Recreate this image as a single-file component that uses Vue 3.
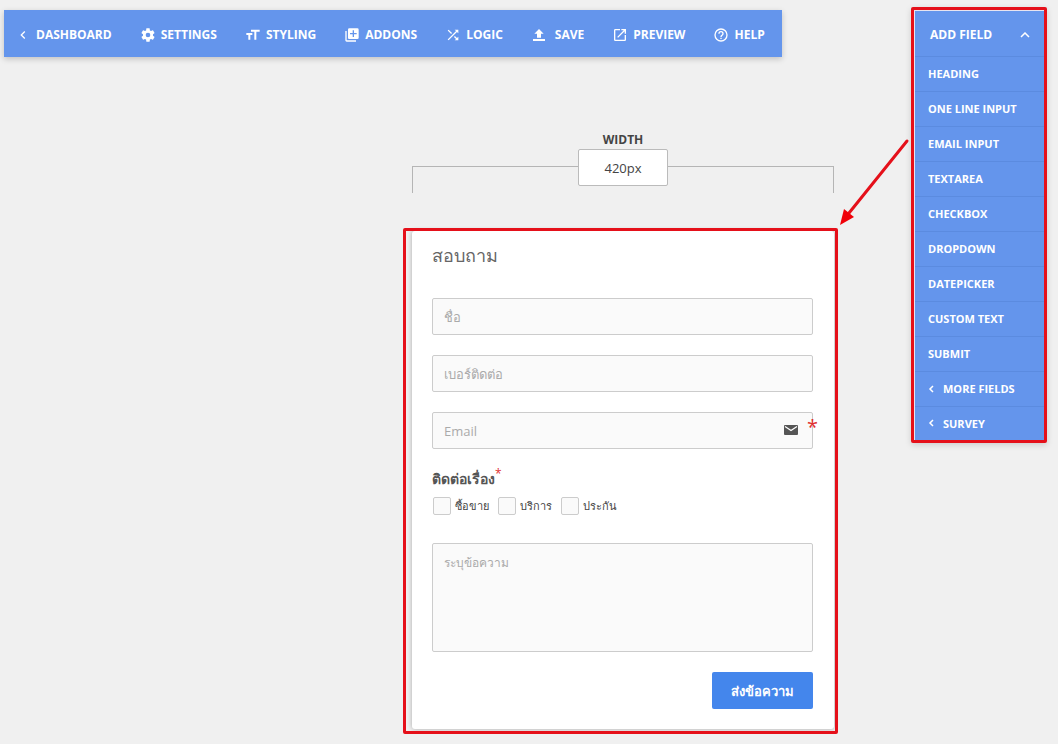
<script setup>
import { ref } from 'vue'

const tools = [
  { name: 'DASHBOARD', icon: 'M15.41 7.41 14 6l-6 6 6 6 1.41-1.41L10.83 12z' },
  { name: 'SETTINGS', icon: 'M19.43 12.98c.04-.32.07-.64.07-.98s-.03-.66-.07-.98l2.11-1.65c.19-.15.24-.42.12-.64l-2-3.46c-.12-.22-.39-.3-.61-.22l-2.49 1c-.52-.4-1.08-.73-1.69-.98l-.38-2.65C14.46 2.18 14.25 2 14 2h-4c-.25 0-.46.18-.49.42l-.38 2.65c-.61.25-1.17.59-1.69.98l-2.49-1c-.23-.09-.49 0-.61.22l-2 3.46c-.13.22-.07.49.12.64l2.11 1.65c-.04.32-.07.65-.07.98s.03.66.07.98l-2.11 1.65c-.19.15-.24.42-.12.64l2 3.46c.12.22.39.3.61.22l2.49-1c.52.4 1.08.73 1.69.98l.38 2.65c.03.24.24.42.49.42h4c.25 0 .46-.18.49-.42l.38-2.65c.61-.25 1.17-.59 1.69-.98l2.49 1c.23.09.49 0 .61-.22l2-3.46c.12-.22.07-.49-.12-.64zM12 15.5a3.5 3.5 0 1 1 0-7 3.5 3.5 0 0 1 0 7z' },
  { name: 'STYLING', icon: 'M9 4v3h5v12h3V7h5V4zM2 12h3v7h3v-7h3V9H2z' },
  { name: 'ADDONS', icon: 'M4 6H2v14c0 1.100.9 2 2 2h14v-2H4zM20 2H8a2 2 0 0 0-2 2v12c0 1.100.9 2 2 2h12a2 2 0 0 0 2-2V4a2 2 0 0 0-2-2zm-1 9h-4v4h-2v-4H9V9h4V5h2v4h4z' },
  { name: 'LOGIC', icon: 'M10.59 9.17 5.41 4 4 5.41l5.170 5.170zM14.500 4l2.040 2.040L4 18.590 5.410 20 17.960 7.460 20 9.500V4zm.33 9.410-1.410 1.410 3.130 3.130L14.500 20H20v-5.500l-2.040 2.040z' },
  { name: 'SAVE', icon: 'M9 16h6v-6h4l-7-7-7 7h4zm-6 2h18v3H3z', wide: true },
  { name: 'PREVIEW', icon: 'M19 19H5V5h7V3H5a2 2 0 0 0-2 2v14a2 2 0 0 0 2 2h14a2 2 0 0 0 2-2v-7h-2zM14 3v2h3.590l-9.830 9.830 1.410 1.410L19 6.410V10h2V3z' },
  { name: 'HELP', icon: 'M11 18h2v-2h-2zM12 2a10 10 0 1 0 0 20 10 10 0 0 0 0-20zm0 18a8 8 0 1 1 0-16 8 8 0 0 1 0 16zm0-14a4 4 0 0 0-4 4h2a2 2 0 1 1 4 0c0 2-3 1.750-3 5h2c0-2.250 3-2.500 3-5a4 4 0 0 0-4-4z' },
]
const fields = [
  { name: 'HEADING' },
  { name: 'ONE LINE INPUT' },
  { name: 'EMAIL INPUT' },
  { name: 'TEXTAREA' },
  { name: 'CHECKBOX' },
  { name: 'DROPDOWN' },
  { name: 'DATEPICKER' },
  { name: 'CUSTOM TEXT' },
  { name: 'SUBMIT' },
  { name: 'MORE FIELDS', more: true },
  { name: 'SURVEY', more: true },
]
const topics = ['ซื้อขาย', 'บริการ', 'ประกัน']
const width = ref('420px')
const chosen = ref([])
</script>

<template>
  <div class="page">
    <header>
      <nav class="toolbar">
        <button v-for="t in tools" :key="t.name" type="button" class="tool" :class="{ wide: t.wide }">
          <svg viewBox="0 0 24 24" aria-hidden="true"><path :d="t.icon" /></svg>
          <span>{{ t.name }}</span>
        </button>
      </nav>
    </header>

    <main>
      <div class="builder">
        <label class="width-label" for="form-width">WIDTH</label>
        <div class="ruler">
          <span class="arm left"></span>
          <input id="form-width" v-model="width" type="text" />
          <span class="arm right"></span>
        </div>

        <form class="card" @submit.prevent>
          <h1>สอบถาม</h1>
          <input class="box" type="text" aria-label="ชื่อ" placeholder="ชื่อ" />
          <input class="box" type="tel" aria-label="เบอร์ติดต่อ" placeholder="เบอร์ติดต่อ" />
          <div class="email">
            <input class="box" type="email" aria-label="Email" placeholder="Email" />
            <svg class="mail" viewBox="0 0 14 10" aria-hidden="true">
              <rect width="14" height="10" rx="1" fill="#555" />
              <path d="M1 1.500 7 5.500 13 1.500" fill="none" stroke="#fff" stroke-width="1.300" />
            </svg>
            <span class="star">*</span>
          </div>
          <fieldset>
            <legend>ติดต่อเรื่อง<sup>*</sup></legend>
            <div class="choices">
              <label v-for="t in topics" :key="t"><input v-model="chosen" type="checkbox" :value="t" />{{ t }}</label>
            </div>
          </fieldset>
          <textarea class="box" aria-label="ระบุข้อความ" placeholder="ระบุข้อความ"></textarea>
          <button type="submit" class="send">ส่งข้อความ</button>
          <span class="frame"></span>
        </form>
        <svg class="arrow" viewBox="0 0 72 90" aria-hidden="true">
          <path d="M69 3 11 75" fill="none" stroke="#e5101a" stroke-width="3" stroke-linecap="round" />
          <path d="M2 87 6 71 11 75 16 79z" fill="#f00008" />
        </svg>
      </div>
    </main>

    <aside>
      <div class="panel">
        <button type="button" class="panel-head">
          <span>ADD FIELD</span>
          <svg viewBox="0 0 10 6" aria-hidden="true"><path d="M1 5 5 1 9 5" /></svg>
        </button>
        <button v-for="f in fields" :key="f.name" type="button" class="field">
          <svg v-if="f.more" viewBox="0 0 6 8" aria-hidden="true"><path d="M5 1 2 4 5 7" /></svg>
          <span>{{ f.name }}</span>
        </button>
      </div>
    </aside>
  </div>
</template>

<style>
body {
  background: #f0f0f0;
}
</style>

<style scoped>
* {
  box-sizing: border-box;
}
.page {
  display: grid;
  grid-template-columns: 1fr auto;
  grid-template-rows: auto 1fr;
  min-height: 100vh;
  font-family: "Open Sans", "Noto Sans", sans-serif;
  color: #444;
}
button,
input,
textarea {
  font-family: inherit;
  margin: 0;
}
header {
  padding: 10px 0 0 4px;
}
.toolbar {
  display: inline-flex;
  height: 47px;
  background: #6495ec;
  box-shadow: 0 2px 6px rgba(0, 0, 0, 0.2);
  vertical-align: top;
}
.tool {
  display: flex;
  align-items: center;
  gap: 5px;
  padding: 2px 17px 0 11px;
  border: 0;
  background: none;
  color: #fff;
  font-size: 12px;
  font-weight: 700;
  white-space: nowrap;
}
.tool svg {
  width: 16px;
  height: 16px;
  fill: currentColor;
}
.tool.wide {
  gap: 8px;
}
main {
  padding: 74px 0 0 335px;
}
.builder {
  position: relative;
  width: 422px;
  margin: 0 auto;
}
.width-label {
  display: block;
  font-size: 12px;
  line-height: 18px;
  font-weight: 700;
  text-align: center;
}
.ruler {
  display: flex;
  align-items: flex-start;
  margin-bottom: 38px;
}
.ruler input {
  width: 90px;
  height: 37px;
  border: 1px solid #bbb;
  border-radius: 2px;
  background: #fff;
  font-size: 13px;
  color: #444;
  text-align: center;
}
.arm {
  flex: 1;
  height: 27px;
  margin-top: 17px;
  border-top: 1px solid #b5b5b5;
}
.arm.left {
  border-left: 1px solid #b5b5b5;
}
.arm.right {
  border-right: 1px solid #b5b5b5;
}
.card {
  position: relative;
  display: flex;
  flex-direction: column;
  gap: 20px;
  padding: 10px 21px 20px 20px;
  background: #fff;
  border-radius: 3px;
  box-shadow: 0 0 5px rgba(0, 0, 0, 0.3);
}
.frame {
  position: absolute;
  inset: -3px -4px -5px -9px;
  border: 3px solid #e5101a;
  border-radius: 2px;
  pointer-events: none;
}
h1 {
  margin: 0 0 9px;
  font-size: 18px;
  line-height: 28px;
  font-weight: 400;
  color: #666;
}
.box {
  display: block;
  width: 100%;
  height: 37px;
  padding: 0 11px;
  border: 1px solid #ccc;
  border-radius: 2px;
  background: #fafafa;
  font-size: 13px;
  color: #444;
}
.box::placeholder {
  color: #aaa;
  opacity: 1;
}
.email {
  position: relative;
}
.mail {
  position: absolute;
  right: 15px;
  top: 13px;
  width: 14px;
  height: 10px;
}
.star {
  position: absolute;
  right: -5px;
  top: 0;
  font-size: 20px;
  line-height: 30px;
  color: #e02f2f;
}
fieldset {
  margin: 0 0 8px;
  padding: 0;
  border: 0;
  min-width: 0;
}
legend {
  padding: 0;
  font-size: 14px;
  line-height: 20px;
  font-weight: 700;
  color: #555;
}
sup {
  font-size: 12px;
  line-height: 0;
  font-weight: 400;
  color: #e02f2f;
}
.choices {
  display: flex;
  gap: 9px;
  margin-top: 7px;
  padding-left: 1px;
}
.choices label {
  display: flex;
  align-items: center;
  gap: 4px;
  font-size: 11px;
  line-height: 19px;
}
.choices input {
  appearance: none;
  width: 18px;
  height: 18px;
  border: 1px solid #ccc;
  border-radius: 2px;
  background: #fafafa;
}
textarea.box {
  height: 109px;
  padding: 9px 11px;
  font-size: 12px;
  resize: none;
}
.send {
  align-self: flex-end;
  height: 37px;
  padding: 2px 19px 0;
  border: 0;
  border-radius: 2px;
  background: #4486ec;
  color: #fff;
  font-size: 13px;
  font-weight: 700;
}
.arrow {
  position: absolute;
  left: 426px;
  top: 7px;
  width: 72px;
  height: 90px;
}
aside {
  grid-column: 2;
  grid-row: 1 / span 2;
  padding: 7px 11px 0 0;
}
.panel {
  width: 136px;
  border: 3px solid #e5101a;
  border-radius: 2px;
  background: #6495ec;
  box-shadow: inset 1px 1px 0 #e8e4f0, 0 2px 6px rgba(0, 0, 0, 0.15);
  padding: 1px 0 0 1px;
}
.panel button {
  display: flex;
  align-items: center;
  width: 100%;
  border: 0;
  border-bottom: 1px solid #5b8be0;
  background: none;
  color: #fff;
  font-weight: 700;
  white-space: nowrap;
}
.panel svg {
  fill: none;
  stroke: currentColor;
  stroke-width: 1.500;
}
.panel .panel-head {
  justify-content: space-between;
  height: 46px;
  padding: 2px 14px 0 15px;
  font-size: 12px;
}
.panel-head svg {
  width: 10px;
  height: 6px;
}
.panel .field {
  gap: 9px;
  height: 35px;
  padding: 0 13px 1px;
  font-size: 11px;
}
.panel .field:last-child {
  height: 33px;
  border-bottom: 0;
}
.field svg {
  width: 6px;
  height: 8px;
}
</style>
